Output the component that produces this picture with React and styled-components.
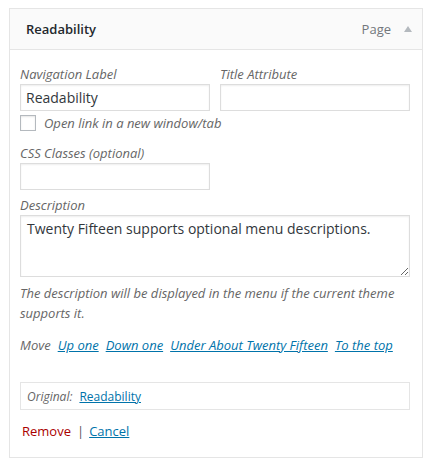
import React from "react";
import styled, { createGlobalStyle } from "styled-components";

const Global = createGlobalStyle`
  body {
    margin: 0;
    background: #fff;
    font-family: "Open Sans", "Noto Sans", sans-serif;
    font-size: 13px;
    color: #444;
  }
`

const Page = styled.div`
  padding: 8px 10px 8px 9px;
`

const Box = styled.div`
  width: 412px;
  border: 1px solid #e5e5e5;
  background: #fff;
`

const Header = styled.div`
  height: 40px;
  display: flex;
  align-items: center;
  padding: 0 10px 0 16px;
  background: #fafafa;
  border-bottom: 1px solid #e5e5e5;
`

const Title = styled.h3`
  margin: 0;
  flex: 1;
  font-size: 13px;
  font-weight: 600;
  color: #23282d;
`

const Type = styled.span`
  color: #72777c;
  font-size: 13px;
`

const Arrow = styled.span`
  width: 0;
  height: 0;
  margin-left: 13px;
  border-left: 4px solid transparent;
  border-right: 4px solid transparent;
  border-bottom: 6px solid #b4b9be;
`

const Body = styled.div`
  padding: 14px 12px 16px 10px;
`

const Row = styled.div`
  display: flex;
  gap: 10px;
`

const Field = styled.div`
  width: ${p => p.$wide ? "390px" : "190px"};
  margin-top: ${p => p.$top || 0}px;
`

const Label = styled.label`
  display: block;
  font-style: italic;
  color: #666;
  line-height: 20px;
`

const Input = styled.input`
  display: block;
  box-sizing: border-box;
  width: 100%;
  height: 27px;
  margin: 0;
  padding: 0 5px;
  border: 1px solid #ddd;
  box-shadow: inset 0 1px 2px rgba(0,0,0,.07);
  font-family: inherit;
  font-size: 14px;
  color: #32373c;
  outline: none;
`

const TextArea = styled.textarea`
  display: block;
  box-sizing: border-box;
  width: 100%;
  height: 62px;
  margin: 0;
  padding: 3px 6px;
  border: 1px solid #ddd;
  box-shadow: inset 0 1px 2px rgba(0,0,0,.07);
  font-family: inherit;
  font-size: 14px;
  line-height: 20px;
  color: #32373c;
  outline: none;
`

const Check = styled.label`
  display: flex;
  align-items: center;
  gap: 8px;
  margin-top: 4px;
  height: 16px;
  font-style: italic;
  color: #666;
`

const CheckBox = styled.span`
  width: 14px;
  height: 14px;
  border: 1px solid #b4b9be;
  background: #fff;
  box-shadow: inset 0 1px 2px rgba(0,0,0,.1);
`

const Help = styled.p`
  margin: 6px 0 0;
  font-style: italic;
  color: #666;
  line-height: 20px;
`

const Move = styled.div`
  margin-top: 12px;
  display: flex;
  gap: 7px;
  line-height: 20px;
  font-style: italic;
  color: #666;
`

const Link = styled.a`
  color: #0073aa;
  text-decoration: underline;
  font-style: ${p => p.$italic ? "italic" : "normal"};
`

const Original = styled.div`
  margin-top: 27px;
  box-sizing: border-box;
  height: 28px;
  border: 1px solid #e5e5e5;
  display: flex;
  align-items: center;
  gap: 7px;
  padding: 0 6px;
  font-size: 12px;
  font-style: italic;
  color: #666;
`

const Actions = styled.div`
  margin-top: 11px;
  padding-left: 2px;
  display: flex;
  align-items: center;
  gap: 6px;
  line-height: 20px;
  font-size: 13px;
`

const Remove = styled.a`
  color: #a00;
`

const Sep = styled.span`
  color: #555;
`

const Cancel = styled.a`
  margin-left: -3px;
  padding: 0 2px;
  color: #0073aa;
  text-decoration: underline;
`

export default function App() {
  return (
    <Page>
      <Global />
      <Box>
        <Header>
          <Title>Readability</Title>
          <Type>Page</Type>
          <Arrow />
        </Header>
        <Body>
          <Row>
            <Field>
              <Label>Navigation Label</Label>
              <Input defaultValue="Readability" />
            </Field>
            <Field>
              <Label>Title Attribute</Label>
              <Input />
            </Field>
          </Row>
          <Check><CheckBox />Open link in a new window/tab</Check>
          <Field $top={12}>
            <Label>CSS Classes (optional)</Label>
            <Input />
          </Field>
          <Field $wide $top={5}>
            <Label>Description</Label>
            <TextArea defaultValue="Twenty Fifteen supports optional menu descriptions." />
          </Field>
          <Help>The description will be displayed in the menu if the current theme supports it.</Help>
          <Move>
            <span>Move</span>
            <Link $italic>Up one</Link>
            <Link $italic>Down one</Link>
            <Link $italic>Under About Twenty Fifteen</Link>
            <Link $italic>To the top</Link>
          </Move>
          <Original>
            <span>Original:</span>
            <Link>Readability</Link>
          </Original>
          <Actions>
            <Remove>Remove</Remove>
            <Sep>|</Sep>
            <Cancel>Cancel</Cancel>
          </Actions>
        </Body>
      </Box>
    </Page>
  )
}
